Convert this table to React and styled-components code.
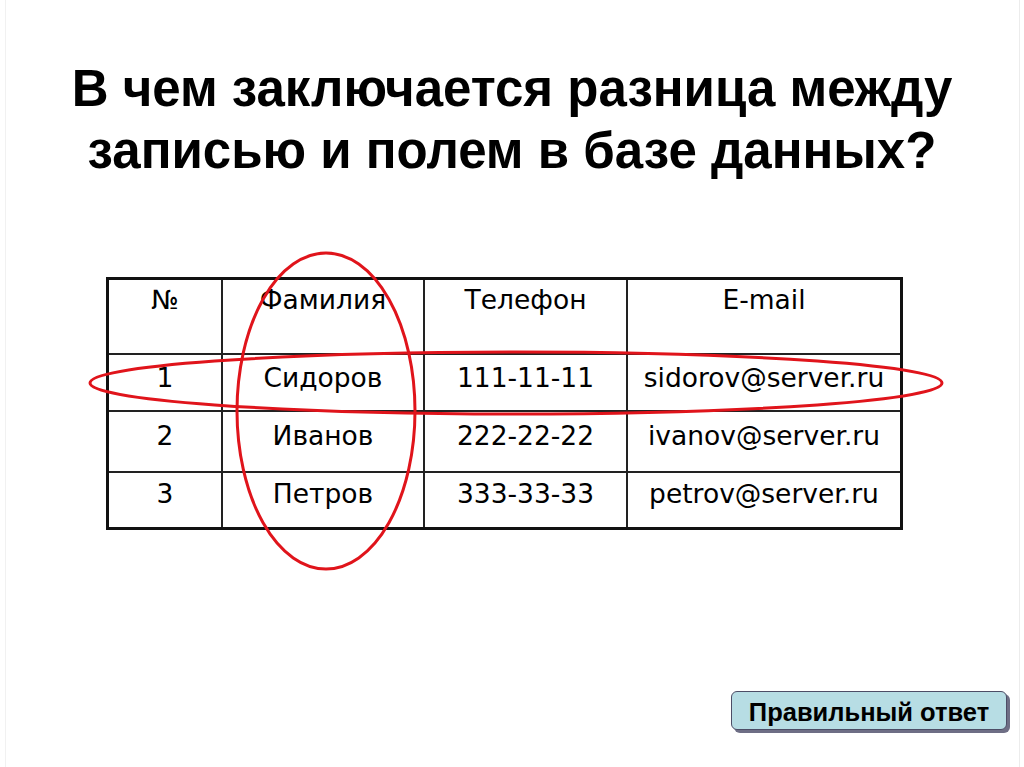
import React from "react";
import styled, { createGlobalStyle } from "styled-components";

const Global = createGlobalStyle`
  html, body { margin: 0; padding: 0; background: #ffffff; }
  #root { width: 1024px; height: 767px; }
`;

const Slide = styled.div`
  position: relative;
  width: 1024px;
  height: 767px;
  box-sizing: border-box;
  background: #fff;
  display: flex;
  flex-direction: column;
  overflow: hidden;
  &::before {
    content: "";
    position: absolute;
    left: 5px;
    top: 0;
    bottom: 0;
    right: 4px;
    border-left: 1px solid #f1f1f1;
    border-right: 1px solid #ececec;
    pointer-events: none;
  }
`;

const Title = styled.h1`
  margin: 0;
  padding-top: 58px;
  font-family: "Liberation Sans", Arial, sans-serif;
  font-weight: bold;
  font-size: 51px;
  line-height: 62px;
  text-align: center;
  color: #000;
`;

const TableArea = styled.div`
  position: relative;
  margin-top: 95px;
  padding-left: 106px;
`;

const Grid = styled.div`
  display: grid;
  width: 791px;
  grid-template-columns: 114px 202px 203px 272px;
  grid-template-rows: 75px 57px 61px 54px;
  border: 3px solid #111;
`;

const Cell = styled.div`
  box-sizing: border-box;
  border-right: ${(p) => (p.$lastCol ? "none" : "2px solid #222")};
  border-bottom: ${(p) => (p.$lastRow ? "none" : "2px solid #222")};
  padding-top: ${(p) => p.$pad}px;
  text-align: center;
  font-family: "DejaVu Sans", sans-serif;
  font-size: 26.5px;
  line-height: 30px;
  white-space: nowrap;
  color: #000;
`;

const Ovals = styled.svg`
  position: absolute;
  left: 0;
  top: -277px;
  width: 1024px;
  height: 767px;
  pointer-events: none;
`;

const Footer = styled.div`
  margin-top: auto;
  display: flex;
  justify-content: flex-end;
  padding: 0 17px 37px 0;
`;

const AnswerButton = styled.button`
  width: 276px;
  height: 39px;
  box-sizing: border-box;
  border: 1.5px solid #4d4d66;
  border-radius: 6px;
  background: #b7dde4;
  box-shadow: 3px 3px 0 #6e6e85;
  font-family: "Liberation Sans", Arial, sans-serif;
  font-weight: bold;
  font-size: 25.5px;
  line-height: 1;
  padding: 4px 0 0 0;
  color: #000;
  cursor: pointer;
`;

const rows = [
  ["№", "Фамилия", "Телефон", "E-mail"],
  ["1", "Сидоров", "111-11-11", "sidorov@server.ru"],
  ["2", "Иванов", "222-22-22", "ivanov@server.ru"],
  ["3", "Петров", "333-33-33", "petrov@server.ru"],
];
const pads = [5, 8, 9, 6];

export default function App() {
  return (
    <>
      <Global />
      <Slide>
        <Title>
          В чем заключается разница между
          <br />
          записью и полем в базе данных?
        </Title>
        <TableArea>
          <Grid>
            {rows.map((r, ri) =>
              r.map((c, ci) => (
                <Cell
                  key={`${ri}-${ci}`}
                  $pad={pads[ri]}
                  $lastCol={ci === r.length - 1}
                  $lastRow={ri === rows.length - 1}
                >
                  {c}
                </Cell>
              ))
            )}
          </Grid>
          <Ovals viewBox="0 0 1024 767">
            <ellipse cx="326" cy="411" rx="89" ry="158" fill="none" stroke="#e0141b" strokeWidth="3" />
            <ellipse cx="516" cy="383" rx="426" ry="31" fill="none" stroke="#e0141b" strokeWidth="3" />
          </Ovals>
        </TableArea>
        <Footer>
          <AnswerButton>Правильный ответ</AnswerButton>
        </Footer>
      </Slide>
    </>
  );
}
